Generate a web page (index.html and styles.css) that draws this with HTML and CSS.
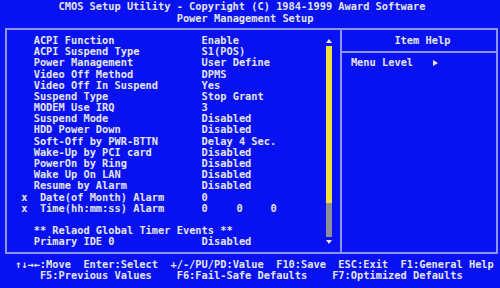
FILE: index.html
```html
<!DOCTYPE html>
<html lang="en">
<head>
  <meta charset="UTF-8" />
  <title>Power Management Setup</title>
  <link rel="stylesheet" href="styles.css">
</head>
<body>

  <div class="screen">
    <div class="title">
      <div class="title-line first">CMOS Setup Utility - Copyright (C) 1984-1999 Award Software</div>
      <div class="title-line second">Power Management Setup</div>
    </div>

    <div class="frame">
      <div class="menu">
        <div class="items">
          <div class="item"><span class="mark"></span><span class="label">ACPI Function</span><span class="value">Enable</span></div>
          <div class="item"><span class="mark"></span><span class="label">ACPI Suspend Type</span><span class="value">S1(POS)</span></div>
          <div class="item"><span class="mark"></span><span class="label">Power Management</span><span class="value">User Define</span></div>
          <div class="item"><span class="mark"></span><span class="label">Video Off Method</span><span class="value">DPMS</span></div>
          <div class="item"><span class="mark"></span><span class="label">Video Off In Suspend</span><span class="value">Yes</span></div>
          <div class="item"><span class="mark"></span><span class="label">Suspend Type</span><span class="value">Stop Grant</span></div>
          <div class="item"><span class="mark"></span><span class="label">MODEM Use IRQ</span><span class="value">3</span></div>
          <div class="item"><span class="mark"></span><span class="label">Suspend Mode</span><span class="value">Disabled</span></div>
          <div class="item"><span class="mark"></span><span class="label">HDD Power Down</span><span class="value">Disabled</span></div>
          <div class="item"><span class="mark"></span><span class="label">Soft-Off by PWR-BTTN</span><span class="value">Delay 4 Sec.</span></div>
          <div class="item"><span class="mark"></span><span class="label">Wake-Up by PCI card</span><span class="value">Disabled</span></div>
          <div class="item"><span class="mark"></span><span class="label">PowerOn by Ring</span><span class="value">Disabled</span></div>
          <div class="item"><span class="mark"></span><span class="label">Wake Up On LAN</span><span class="value">Disabled</span></div>
          <div class="item"><span class="mark"></span><span class="label">Resume by Alarm</span><span class="value">Disabled</span></div>
          <div class="item sub"><span class="mark">x</span><span class="label">Date(of Month) Alarm</span><span class="value">0</span></div>
          <div class="item sub"><span class="mark">x</span><span class="label">Time(hh:mm:ss) Alarm</span><span class="value"><span class="field">0</span><span class="field">0</span><span>0</span></span></div>
          <div class="item"></div>
          <div class="item banner"><span class="mark"></span><span class="label">** Relaod Global Timer Events **</span></div>
          <div class="item"><span class="mark"></span><span class="label">Primary IDE 0</span><span class="value">Disabled</span></div>
        </div>

        <div class="scrollbar">
          <div class="arrow"><span class="tri-up"></span></div>
          <div class="thumb"></div>
          <div class="track"></div>
          <div class="arrow"><span class="tri-down"></span></div>
        </div>
      </div>

      <div class="help">
        <div class="help-title">Item Help</div>
        <div class="help-body">
          <span>Menu Level</span><span class="pointer"></span>
        </div>
      </div>
    </div>

    <div class="keys">
      <div class="key-line first">↑↓→←:Move  Enter:Select  +/-/PU/PD:Value  F10:Save  ESC:Exit  F1:General Help</div>
      <div class="key-line second">F5:Previous Values    F6:Fail-Safe Defaults    F7:Optimized Defaults</div>
    </div>
  </div>

</body>
</html>
```

FILE: styles.css
```css
body {
  margin: 0;
  background: #0812f0;
}

.screen {
  width: 500px;
  height: 288px;
  box-sizing: border-box;
  padding-top: 1.4px;
  background: #0812f0;
  color: #e4e4ec;
  font-family: "DejaVu Sans Mono", "Liberation Mono", monospace;
  font-size: 10.33px;
  font-weight: bold;
  line-height: 11.2px;
  overflow: hidden;
}

/* header */
.title {
  margin-bottom: 4.6px;
}

.title-line {
  height: 11.2px;
  white-space: pre;
}

.title-line.first {
  padding-left: 58.5px;
}

.title-line.second {
  padding-left: 176.7px;
}

/* main frame */
.frame {
  display: flex;
  box-sizing: border-box;
  width: 493.5px;
  height: 226px;
  margin-left: 4.5px;
  margin-bottom: 4.6px;
  border: 2px solid #8c96e4;
}

.menu {
  display: flex;
  flex: none;
  box-sizing: border-box;
  width: 335.5px;
  padding: 4.6px 0;
  border-right: 2px solid #8c96e4;
}

.items {
  flex: 1;
}

.item {
  display: grid;
  grid-template-columns: 27.2px 167.9px 1fr;
  height: 11.2px;
  white-space: pre;
}

.mark {
  padding-left: 14.7px;
}

.item.sub .label {
  padding-left: 6.22px;
}

.item.banner .label {
  grid-column: 2 / 4;
}

.field {
  display: inline-block;
  width: 35px;
}

.field + .field {
  width: 34px;
}

/* scroll bar */
.scrollbar {
  flex: none;
  width: 6px;
  margin-right: 8px;
}

.arrow {
  display: flex;
  align-items: center;
  justify-content: center;
  height: 11.2px;
}

.tri-up {
  width: 0;
  height: 0;
  border-left: 3px solid transparent;
  border-right: 3px solid transparent;
  border-bottom: 4px solid #e8e8f0;
}

.tri-down {
  width: 0;
  height: 0;
  border-left: 3px solid transparent;
  border-right: 3px solid transparent;
  border-top: 4px solid #e8e8f0;
}

.thumb {
  height: 156.8px;
  background: #f4de3c;
}

.track {
  height: 33.6px;
  background: #8a8c9c;
}

/* help panel */
.help {
  flex: 1;
}

.help-title {
  height: 11.2px;
  padding: 4.6px 0 4.6px 52.4px;
  border-bottom: 2px solid #8c96e4;
  white-space: pre;
}

.help-body {
  display: flex;
  align-items: center;
  height: 11.2px;
  padding: 4.6px 0 0 8.9px;
  white-space: pre;
}

.pointer {
  width: 0;
  height: 0;
  margin-left: 20px;
  border-top: 3px solid transparent;
  border-bottom: 3px solid transparent;
  border-left: 5px solid #e8e8f0;
}

/* key legend */
.key-line {
  height: 11.2px;
  white-space: pre;
}

.key-line.first {
  padding-left: 15px;
}

.key-line.second {
  padding-left: 39.9px;
}
```
